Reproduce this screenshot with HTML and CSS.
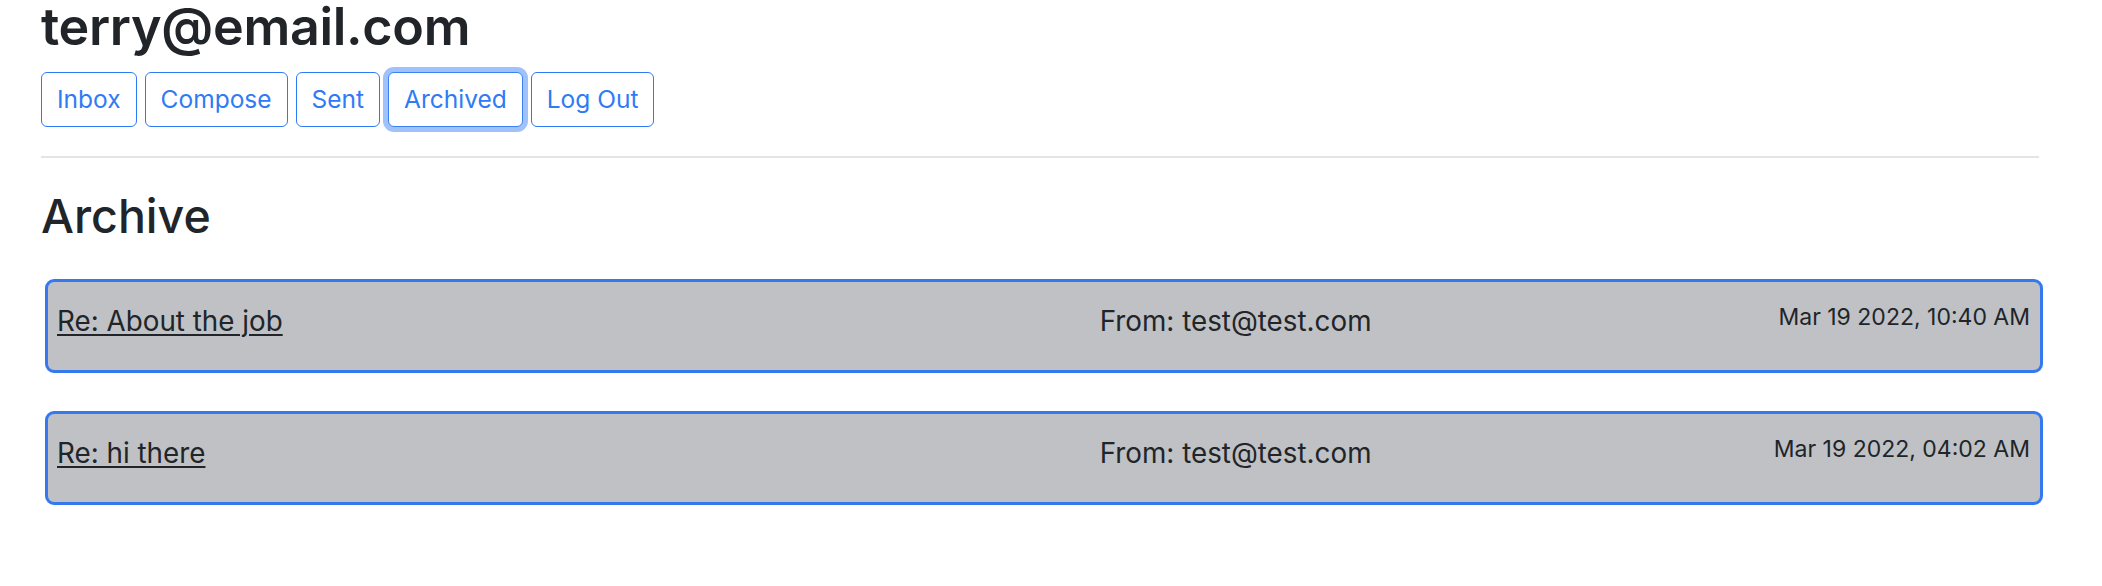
FILE: index.html
```html
<!DOCTYPE html>
<html lang="en">
<head>
<meta charset="utf-8">
<title>Archive</title>
<link rel="stylesheet" href="styles.css">
</head>
<body>
<div class="page">
  <h1 class="user">terry@email.com</h1>
  <nav class="nav">
    <button class="btn">Inbox</button>
    <button class="btn">Compose</button>
    <button class="btn">Sent</button>
    <button class="btn btn-focus">Archived</button>
    <button class="btn">Log Out</button>
  </nav>
  <hr class="rule">
  <h2 class="title">Archive</h2>
  <div class="list">
    <div class="mail">
      <a class="subject" href="#">Re: About the job</a>
      <span class="from">From: test@test.com</span>
      <span class="date">Mar 19 2022, 10:40 AM</span>
    </div>
    <div class="mail">
      <a class="subject" href="#">Re: hi there</a>
      <span class="from">From: test@test.com</span>
      <span class="date">Mar 19 2022, 04:02 AM</span>
    </div>
  </div>
</div>
</body>
</html>
```
FILE: styles.css
```css
html, body {
  margin: 0;
  padding: 0;
  background: #ffffff;
}
body {
  font-family: Inter, "Noto Sans", "Liberation Sans", sans-serif;
  color: #212529;
}
.page {
  padding: 0 63px 0 41px;
}
.user {
  margin: 0;
  font-size: 52px;
  line-height: 54px;
  font-weight: 600;
  letter-spacing: -0.3px;
}
.nav {
  display: flex;
  gap: 8px;
  margin-top: 18px;
}
.btn {
  font-family: inherit;
  font-size: 24.5px;
  line-height: 37px;
  padding: 8px 15px;
  border: 1px solid #2f7bf5;
  border-radius: 6px;
  background: #ffffff;
  color: #2f7bf5;
  cursor: pointer;
}
.btn-focus {
  box-shadow: 0 0 0 5px #a0c2fb;
  border-color: #3b82f6;
}
.rule {
  margin: 29px 0 0 0;
  border: 0;
  border-top: 2px solid #e4e4e4;
  height: 0;
}
.title {
  margin: 31px 0 0 0;
  font-size: 46.5px;
  line-height: 1.2;
  font-weight: 500;
}
.list {
  display: flex;
  flex-direction: column;
  gap: 38px;
  margin: 34px -4px 0 4px;
}
.mail {
  display: grid;
  grid-template-columns: 52.85% 1fr auto;
  align-items: start;
  padding: 18px 10px 28px 9px;
  border: 3px solid #3479f0;
  border-radius: 9px;
  background: #bfc1c5;
}
.subject {
  font-size: 27.8px;
  line-height: 42px;
  color: #212529;
  text-decoration: underline;
  text-decoration-thickness: 2px;
  text-underline-offset: 3px;
  justify-self: start;
}
.from {
  font-size: 27.8px;
  line-height: 42px;
}
.date {
  font-size: 23px;
  line-height: 1.5;
  text-align: right;
}
```
